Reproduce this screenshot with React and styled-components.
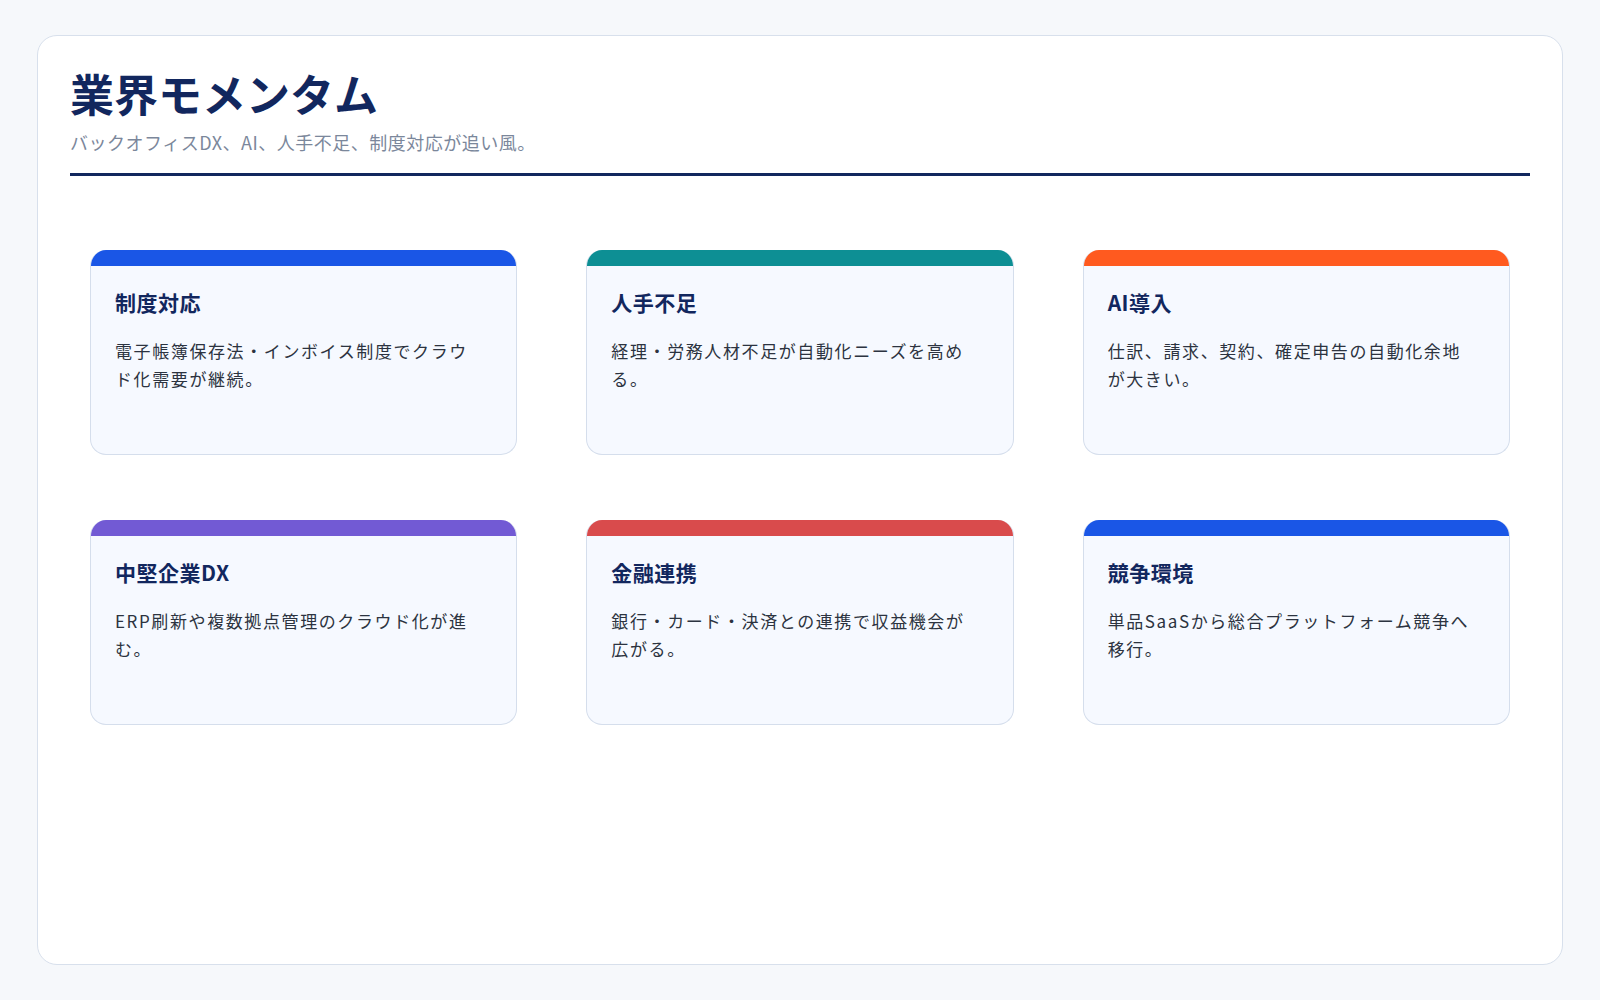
import React from 'react';
import styled, { createGlobalStyle } from 'styled-components';

const Global = createGlobalStyle`
  body {
    margin: 0;
    background: #f6f8fb;
    font-family: "Noto Sans CJK JP", "Noto Sans", sans-serif;
  }
`;

const Page = styled.div`
  padding: 35px 37px;
  min-height: 1000px;
  box-sizing: border-box;
`;

const Panel = styled.div`
  background: #fff;
  border: 1.5px solid #d8e0ec;
  border-radius: 20px;
  height: 930px;
  box-sizing: border-box;
  padding: 28px 32px;
`;

const Title = styled.h1`
  margin: 0;
  font-size: 44px;
  font-weight: 700;
  color: #12275e;
  line-height: 1.35;
`;

const Subtitle = styled.p`
  margin: 6px 0 0;
  font-size: 18px;
  letter-spacing: 0.5px;
  color: #7b879b;
`;

const Divider = styled.div`
  height: 3px;
  background: #12275e;
  margin-top: 18px;
`;

const Grid = styled.div`
  display: grid;
  grid-template-columns: repeat(3, 1fr);
  column-gap: 69px;
  row-gap: 65px;
  padding: 74px 20px 0;
`;

const Card = styled.div`
  height: 205px;
  background: #f6f9ff;
  border: 1.5px solid #d5deec;
  border-top: none;
  border-radius: 16px;
  overflow: hidden;
  box-sizing: border-box;
`;

const Bar = styled.div`
  height: 16px;
  background: ${({ color }) => color};
  border-radius: 8px 8px 0 0;
`;

const Body = styled.div`
  padding: 21px 24px;
`;

const CardTitle = styled.h3`
  margin: 0 0 20px;
  font-size: 21px;
  letter-spacing: 0.5px;
  font-weight: 700;
  color: #12275e;
`;

const Desc = styled.p`
  margin: 0;
  font-size: 17px;
  letter-spacing: 1.6px;
  line-height: 28px;
  color: #2c3340;
  padding-right: 8px;
`;

const items = [
  ['#1a56e6', '制度対応', '電子帳簿保存法・インボイス制度でクラウド化需要が継続。'],
  ['#0d8f94', '人手不足', '経理・労務人材不足が自動化ニーズを高める。'],
  ['#ff5a1f', 'AI導入', '仕訳、請求、契約、確定申告の自動化余地が大きい。'],
  ['#725ad4', '中堅企業DX', 'ERP刷新や複数拠点管理のクラウド化が進む。'],
  ['#d94b4c', '金融連携', '銀行・カード・決済との連携で収益機会が広がる。'],
  ['#1a56e6', '競争環境', '単品SaaSから総合プラットフォーム競争へ移行。'],
];

export default function App() {
  return (
    <Page>
      <Global />
      <Panel>
        <Title>業界モメンタム</Title>
        <Subtitle>バックオフィスDX、AI、人手不足、制度対応が追い風。</Subtitle>
        <Divider />
        <Grid>
          {items.map(([c, t, d], i) => (
            <Card key={i}>
              <Bar color={c} />
              <Body>
                <CardTitle>{t}</CardTitle>
                <Desc>{d}</Desc>
              </Body>
            </Card>
          ))}
        </Grid>
      </Panel>
    </Page>
  );
}
